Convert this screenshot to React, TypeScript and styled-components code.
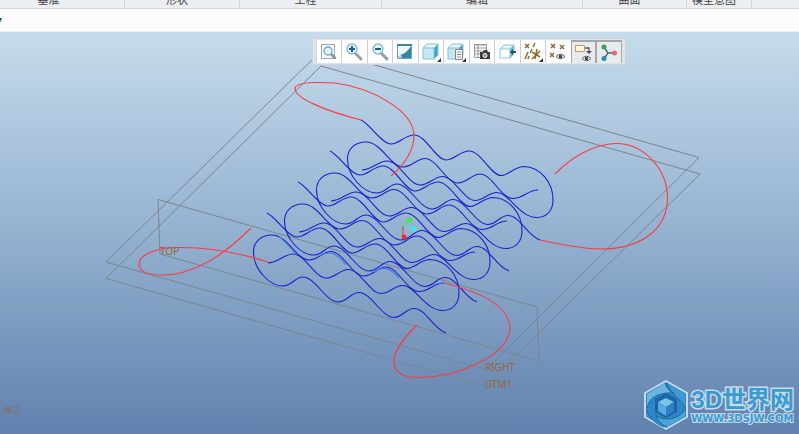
import React from "react";
import styled, { createGlobalStyle } from "styled-components";

const GlobalStyle = createGlobalStyle`
  * { box-sizing: border-box; }
  body { margin: 0; font-family: "Liberation Sans", "Noto Sans CJK SC", sans-serif; }
`;

const Window = styled.div`
  display: flex;
  flex-direction: column;
  height: 100vh;
  overflow: hidden;
`;

const Ribbon = styled.header`
  display: grid;
  grid-template-columns: 125fr 115fr 142fr 201fr 104fr 65fr 47fr;
  height: 9px;
  flex: none;
  overflow: hidden;
  background: #edeef1;
  border-bottom: 1px solid #d3d5d9;
`;

const RibbonGroup = styled.div<{ $shift?: number }>`
  display: flex;
  justify-content: center;
  align-items: flex-end;
  height: 8px;
  padding-right: ${(p) => p.$shift ?? 10}px;
  padding-bottom: 1px;
  border-right: 1px solid #d3d5d9;
  color: #444;
  font-size: 11px;
  line-height: 14px;
  white-space: nowrap;
  &:last-child { border-right: none; }
`;

const MessageBar = styled.div`
  height: 23px;
  flex: none;
  display: flex;
  align-items: center;
  background: #fbfbfb;
  border-bottom: 1px solid #eef1f3;
  color: #444;
  font-size: 12px;
  line-height: 22px;
  overflow: hidden;
`;

const Marker = styled.span`
  margin-left: -4px;
`;

const Viewport = styled.main`
  position: relative;
  flex: 1;
  min-height: 0;
  background: linear-gradient(#c6dcec, #94b1d0 50%, #6181ae);
`;

const Scene = styled.svg`
  display: block;
  width: 100%;
  height: 100%;
  fill: none;
  font-family: "Noto Sans", "Noto Sans CJK SC", sans-serif;
`;

const Toolbar = styled.div`
  position: absolute;
  top: 6px;
  left: 39%;
  width: 314px;
  height: 27px;
  padding: 1px 3px;
  display: grid;
  grid-template-columns: repeat(12, 1fr);
  background: #dde5ec;
  border: 1px solid #cfd4d8;
`;

const ToolButton = styled.button<{ $on?: boolean }>`
  display: flex;
  align-items: center;
  justify-content: center;
  padding: 0;
  border: solid ${(p) => (p.$on ? "#a3a6aa" : "#cdcfd2")};
  border-width: ${(p) => (p.$on ? "2px 1px 0" : "0 0 0 1px")};
  background: ${(p) => (p.$on ? "#e8eaed" : "#fff")};
`;

const Icon = styled.svg`
  width: 20px;
  height: 20px;
  flex: none;
  fill: none;
`;

const Brand = styled.a`
  position: absolute;
  right: 5px;
  bottom: 3px;
  display: flex;
  align-items: center;
  gap: 2px;
  text-decoration: none;
`;

const BrandMark = styled.svg`
  width: 46px;
  height: 52px;
`;

const BrandText = styled.span`
  display: flex;
  flex-direction: column;
  color: #3c9ad3;
  -webkit-text-stroke: 3px #c5dbea;
  paint-order: stroke fill;
`;

const BrandName = styled.span`
  display: flex;
  align-items: baseline;
  font: bold 24px/26px "Noto Sans CJK SC", sans-serif;
`;

const BrandPrefix = styled.span`
  font: bold 24px/26px "Liberation Sans", sans-serif;
`;

const BrandSite = styled.span`
  font: bold 10px/12px "DejaVu Sans", sans-serif;
  -webkit-text-stroke-width: 2px;
`;

const Lens = ({ sign }: { sign: "plus" | "minus" }) => (
  <>
    <path d="M12 12l5 5" stroke="#9a9fa3" strokeWidth="3" strokeLinecap="round" />
    <circle cx="8" cy="7" r="5" fill="#e9f6fb" stroke="#7db9d0" strokeWidth="1.3" />
    <path d={sign === "plus" ? "M5 7h6M8 4v6" : "M5 7h6"} stroke="#17608b" strokeWidth="2" />
  </>
);

const Cube = () => (
  <>
    <path d="M2 6l4-4h11l-4 4z" fill="#e2f6fc" />
    <path d="M13 6l4-4v11l-4 4z" fill="#42a3c5" />
    <path d="M2 6h11v11H2z" fill="#c3e8f4" />
    <path d="M2 6l4-4h11v11l-4 4H2zM2 6h11v11M13 6l4-4" stroke="#83c2da" />
  </>
);

const More = () => <path d="M20 16v4h-4z" fill="#333" />;

const Eye = ({ x, y }: { x: number; y: number }) => (
  <g transform={`translate(${x} ${y})`}>
    <path d="M0 3.5Q4.5-1 9 3.5Q4.5 8 0 3.5z" fill="#fff" stroke="#5c5e61" />
    <circle cx="4.5" cy="3.5" r="1.8" fill="#444" />
  </g>
);

const tools: { label: string; on?: boolean; art: React.ReactNode }[] = [
  {
    label: "重新调整",
    art: (
      <>
        <path d="M2.5 2.5h13v14h-13z" fill="#f8fafb" stroke="#a2a6aa" />
        <path d="M12 12l4 4" stroke="#8c9297" strokeWidth="2.5" strokeLinecap="round" />
        <circle cx="9" cy="9" r="4" fill="#e5f6fc" stroke="#5aa8c8" strokeWidth="1.3" />
      </>
    ),
  },
  { label: "放大", art: <Lens sign="plus" /> },
  { label: "缩小", art: <Lens sign="minus" /> },
  {
    label: "重画",
    art: (
      <>
        <path d="M2.5 3.5h14v13h-14z" fill="#a9d5e6" stroke="#6aa3ba" />
        <path d="M3 4h13C13 9 9 12 3 14z" fill="#eef6f9" />
        <path d="M16 4v12H6C8 14 7 13 5 13C10 12 14 8 16 4z" fill="#2f86a6" />
        <path d="M2 3h15" stroke="#4b7f94" strokeWidth="2" />
      </>
    ),
  },
  { label: "显示样式", art: <><Cube /><More /></> },
  {
    label: "已保存方向",
    art: (
      <>
        <Cube />
        <path d="M9.5 7.5h7v10h-7z" fill="#fff" stroke="#858585" />
        <path d="M11 10h4M11 12.5h4M11 15h4" stroke="#858585" />
        <More />
      </>
    ),
  },
  {
    label: "视图管理器",
    art: (
      <>
        <path d="M2.5 2.5h12v13h-12z" fill="#fff" stroke="#999" />
        <path d="M2 3h13M3 6h12M3 9h12M3 12h12M6 2v14" stroke="#999" />
        <path d="M8 10h3l1-2h3l1 2h2v7H8z" fill="#393c3f" />
        <circle cx="13" cy="13.5" r="2" fill="#8b9297" stroke="#fff" />
      </>
    ),
  },
  {
    label: "视图法向",
    art: (
      <>
        <path d="M3 7l4-4h10l-4 4z" fill="#e2f5fb" />
        <path d="M3 7h10v9H3z" fill="#fff" />
        <path d="M13 7l4-4v9l-4 4z" fill="#6bb6d2" />
        <path d="M3 7l4-4h10v9l-4 4H3zM3 7h10v9M13 7l4-4" stroke="#8bc6db" />
        <path d="M19 10h-5" stroke="#35474f" strokeWidth="2" />
        <path d="M16 7v6l-3-3z" fill="#35474f" />
      </>
    ),
  },
  {
    label: "基准显示",
    art: (
      <>
        <path d="M2 2l4 4m0-4L2 6" stroke="#8d6a32" strokeWidth="1.5" />
        <path d="M12 1l-2 4M5 10l-3 7M9 7l-2 4m-1 3l-1 3M14 7l-2 10M9 10l8 5m0-6l-8 8" stroke="#8d6a32" strokeWidth="1.5" />
        <More />
      </>
    ),
  },
  {
    label: "点显示",
    art: (
      <>
        <path d="M3 2l4 4m0-4L3 6M12 3l4 4m0-4l-4 4M2 11l4 4m0-4l-4 4" stroke="#8d6a32" strokeWidth="1.5" />
        <Eye x={8} y={11} />
      </>
    ),
  },
  {
    label: "注释显示",
    on: true,
    art: (
      <>
        <path d="M2.5 2.5h9v6h-9z" fill="#fff7d9" stroke="#b5a27c" />
        <path d="M12 5h4v4" stroke="#5b5b5b" strokeWidth="1.3" />
        <path d="M13 8h6l-3 3z" fill="#4b4b4b" />
        <Eye x={9} y={12} />
      </>
    ),
  },
  {
    label: "旋转中心",
    on: true,
    art: (
      <>
        <path d="M5 4l4 6-4 6M9 10h7" stroke="#58676d" strokeWidth="1.5" />
        <circle cx="5" cy="4" r="2.5" fill="#3ca05b" />
        <circle cx="5" cy="15.5" r="2.5" fill="#298eaf" />
        <circle cx="15.5" cy="10" r="2.5" fill="#e86969" />
      </>
    ),
  },
];

const groups = ["形状", "工程", "编辑", "曲面", "模型意图"];

const outerStrand =
  "M361 120C370 124 382 144 391 144C399 144 405 135 414 135C426 135 436 160 446 160C454 160 460 151 469 151C481 151 491 175.5 501 175.5C508 175.5 515 166.5 524 166.5C540 167 553 182 553 200C553 210 547 217.5 537 217.5C519 217.5 509 192.5 497 192.5C488 192.5 484 200.5 475 200.5C464 200.5 454 176.5 442.5 176.5C434 176.5 429 185 420 185C409 185 399 161 387 161C378 161 372 170 362 170";
const innerStrand =
  "M538 190C528 190 523 198.5 513 198.5C501 198.5 492 174 480 174C472 174 467 183 458 183C446 183 437 158.5 425 158.5C417 158.5 412 167 403 167C391 167 381 142 366 142C355 142 347 149 347.5 160C348 176 363 193 377 193C386 193 389 184 397 184C409 184 420 209 432 209C441 209 445 199.5 453 199.5C465 199.5 476 224.5 488 224.5C496 224.5 500 215.5 508 215.5C520 215.5 527 236 540 240";
const repeats = [[0, 0], [-31, 31], [-63, 62], [-94, 93]];

const Model = () => (
  <Scene viewBox="0 32 799 402" preserveAspectRatio="xMidYMin slice" role="img" aria-label="3D model">
    <g stroke="#7d858f">
      <path d="M491 365L699 157.5L322 50L106 262L484 369" />
      <path d="M491 380L700 174L321 66L106 278.5L484 386" />
      <path d="M158 199.5L537 307L539 361L160 254z" />
    </g>
    <g stroke="#1c20cb" strokeWidth="1.1">
      {repeats.map(([x, y]) => (
        <g key={x} transform={`translate(${x} ${y})`}>
          <path d={outerStrand} />
          <path d={innerStrand} />
        </g>
      ))}
    </g>
    <path d="M279 237C285 240 290 248 296 254M319 256C328 251 336 251 346 265M374 272C383 266 390 267 399 278M433 285C437 283 440 283 444 283" stroke="#4c78e4" strokeWidth="1.2" />
    <g stroke="#fb3b41" strokeWidth="1.1">
      <path d="M361 120C330 112 291 98 295.5 87C299 82 318 82 335 83C373 88 413 111 414 135C414 151 404 165 391 176" />
      <path d="M555 174C574 155 596 144 615 143.5C644 143 667 169 667.5 197C668 229 641 249 601 249C579 249 559 244 540 240" />
      <path d="M268 262C233 251 200 247 177 247.5C153 248 138 256 139 265C140 272 150 275 162 275C197 275 227 252 251 228" />
      <path d="M444 283C477 291 509 304 510 328C509 356 457 377 420 377.5C402 378 394 372 394 361C394 350 404 338 417 325" />
    </g>
    <path d="M403 226v11" stroke="#f8282d" />
    <path d="M403 226l7-6" stroke="#38ef3b" />
    <path d="M403 226l11 3" stroke="#31f1f4" />
    <circle cx="404" cy="237" r="2.5" fill="#f8282d" />
    <circle cx="409.5" cy="220" r="2.5" fill="#38ef3b" />
    <circle cx="414" cy="229" r="2.5" fill="#31f1f4" />
    <g fill="#97673c" fontSize="10">
      <text x="160" y="255">TOP</text>
      <text x="485" y="371">RIGHT</text>
      <text x="485" y="388">DTM1</text>
      <text x="-4" y="413" fontSize="8" opacity="0.7">入模式</text>
    </g>
  </Scene>
);

const Logo = () => (
  <BrandMark viewBox="0 0 46 52" aria-hidden="true">
    <path d="M23 2l21 12v24L23 50 2 38V14z" fill="#2f86c6" stroke="#c5dbea" strokeWidth="2" strokeLinejoin="round" />
    <path d="M22 4L4 15v14C6 20 13 13 31 14 27 12 24 9 22 4z" fill="#69b5e0" />
    <path d="M24 4l18 11v14C39 20 28 17 24 4z" fill="#3f98d3" />
    <path d="M42 30v7L24 48C17 45 14 40 13 37c12 6 24 2 29-7z" fill="#4ba4d8" />
    <path d="M4 31c1 8 9 14 17 17L4 37z" fill="#4195d0" />
    <path d="M22 4c2 6 5 9 9 10M4 29C6 20 13 13 31 14M24 4c4 13 15 16 18 25M13 37c12 6 24 2 29-7M4 31c2 8 9 14 17 17M13 19v18c1 3 4 8 11 11" stroke="#1b67a4" fill="none" />
    <path d="M23 14l11 6v13l-11 6-11-6V20z" fill="#1b66a8" />
    <path d="M23 19l8 4-8 5-8-5z" fill="#78c6ea" />
    <path d="M15 23l8 5v9l-8-5z" fill="#56aadd" />
    <path d="M31 23l-8 5v9l8-5z" fill="#2c82c4" />
  </BrandMark>
);

export default function App() {
  return (
    <Window>
      <GlobalStyle />
      <Ribbon>
        <RibbonGroup $shift={27}>基准</RibbonGroup>
        {groups.map((name) => (
          <RibbonGroup key={name}>{name}</RibbonGroup>
        ))}
        <RibbonGroup />
      </Ribbon>
      <MessageBar>
        <Marker>▾</Marker>
      </MessageBar>
      <Viewport>
        <Model />
        <Toolbar role="toolbar" aria-label="视图">
          {tools.map((tool) => (
            <ToolButton key={tool.label} type="button" $on={tool.on} aria-label={tool.label} aria-pressed={tool.on}>
              <Icon viewBox="0 0 20 20" aria-hidden="true">{tool.art}</Icon>
            </ToolButton>
          ))}
        </Toolbar>
        <Brand href="#">
          <Logo />
          <BrandText>
            <BrandName>
              <BrandPrefix>3D</BrandPrefix>世界网
            </BrandName>
            <BrandSite>WWW.3DSJW.COM</BrandSite>
          </BrandText>
        </Brand>
      </Viewport>
    </Window>
  );
}
